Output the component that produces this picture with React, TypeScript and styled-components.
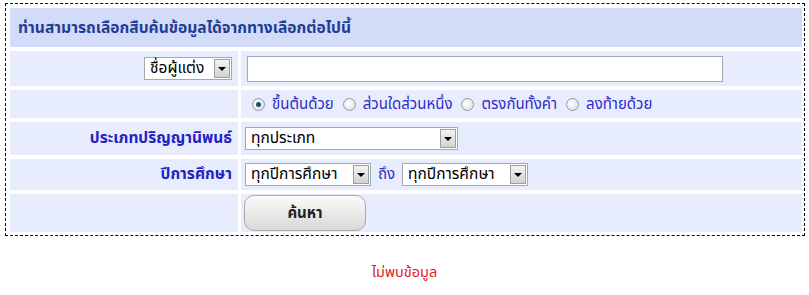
import styled, { createGlobalStyle } from "styled-components";

const GlobalStyle = createGlobalStyle`
  body {
    margin: 0;
    background: #ffffff;
    font-family: Tahoma, "Noto Sans Thai", "Noto Sans", "DejaVu Sans", sans-serif;
    font-size: 13px;
  }
`;

const Frame = styled.div`
  margin: 3px 0 0 5px;
  width: 792px;
  border: 1px dashed #000;
  padding: 4px 2px 3px 4px;
`;

const Grid = styled.div`
  display: grid;
  grid-template-columns: 228px 1fr;
  column-gap: 3px;
  row-gap: 4px;
`;

const HeaderCell = styled.div`
  grid-column: 1 / 3;
  height: 39px;
  background: #d2dcf9;
  display: flex;
  align-items: center;
  padding-left: 8px;
  color: #1f3c96;
  font-weight: bold;
  font-size: 15.6px;
`;

const LabelCell = styled.div<{ $h: number }>`
  height: ${(p) => p.$h}px;
  background: #e8edfd;
  display: flex;
  align-items: center;
  justify-content: flex-end;
  padding-right: 6px;
  color: #2222c4;
  font-weight: bold;
  font-size: 15.5px;
`;

const ValueCell = styled.div<{ $h: number }>`
  height: ${(p) => p.$h}px;
  background: #e8edfd;
  display: flex;
  align-items: center;
  gap: 7px;
  padding-left: 4px;
`;

const FakeSelect = styled.div<{ $w: number }>`
  width: ${(p) => p.$w}px;
  height: 23px;
  box-sizing: border-box;
  background: #fff;
  border: 1px solid #a3a9ae;
  display: flex;
  align-items: center;
  justify-content: space-between;
  padding: 0 1px 0 5px;
  color: #000;
  font-size: 15.5px;
  font-weight: normal;
`;

const Arrow = styled.span`
  width: 16px;
  height: 19px;
  box-sizing: border-box;
  border: 1px solid #9aa0a6;
  background: linear-gradient(#f4f4f4, #d2d2d2);
  display: flex;
  align-items: center;
  justify-content: center;
  &::after {
    content: "";
    border-left: 4px solid transparent;
    border-right: 4px solid transparent;
    border-top: 4px solid #000;
  }
`;

const TextInput = styled.div`
  width: 476px;
  height: 26px;
  box-sizing: border-box;
  border: 1px solid #a3a9ae;
  background: #fff;
  margin-left: 2px;
`;

const RadioGroup = styled.div`
  display: flex;
  align-items: center;
  gap: 9px;
  padding-left: 7px;
`;

const RadioItem = styled.label`
  display: flex;
  align-items: center;
  gap: 7px;
  color: #2c2cc8;
  font-size: 15px;
`;

const RadioDot = styled.span<{ $on?: boolean }>`
  width: 11px;
  height: 11px;
  border-radius: 50%;
  border: 1px solid #8d99a6;
  background: radial-gradient(circle at 40% 40%, #ffffff, #d5dade);
  display: flex;
  align-items: center;
  justify-content: center;
  &::after {
    content: "";
    width: 5px;
    height: 5px;
    border-radius: 50%;
    background: ${(p) => (p.$on ? "#1d4f6e" : "transparent")};
  }
`;

const To = styled.span`
  color: #2c2cc8;
  font-size: 15px;
`;

const SearchButton = styled.button`
  width: 122px;
  height: 36px;
  margin-left: -1px;
  border: 1px solid #a8a8a8;
  border-radius: 10px;
  background: linear-gradient(#fbfbfb, #e6e6e6 60%, #d9d9d9);
  font-family: inherit;
  font-size: 15px;
  font-weight: bold;
  color: #222;
`;

const NotFound = styled.div`
  margin-top: 26px;
  text-align: center;
  color: #e3202c;
  font-size: 14.5px;
`;

const Select = ({ w, label }: { w: number; label: string }) => (
  <FakeSelect $w={w}>
    <span>{label}</span>
    <Arrow />
  </FakeSelect>
);

const modes = ["ขึ้นต้นด้วย", "ส่วนใดส่วนหนึ่ง", "ตรงกันทั้งคำ", "ลงท้ายด้วย"];

export default function App() {
  return (
    <>
      <GlobalStyle />
      <Frame>
        <Grid>
          <HeaderCell>ท่านสามารถเลือกสืบค้นข้อมูลได้จากทางเลือกต่อไปนี้</HeaderCell>

          <LabelCell $h={35}>
            <Select w={88} label="ชื่อผู้แต่ง" />
          </LabelCell>
          <ValueCell $h={35}>
            <TextInput />
          </ValueCell>

          <LabelCell $h={28} />
          <ValueCell $h={28}>
            <RadioGroup>
              {modes.map((m, i) => (
                <RadioItem key={m}>
                  <RadioDot $on={i === 0} />
                  {m}
                </RadioItem>
              ))}
            </RadioGroup>
          </ValueCell>

          <LabelCell $h={33}>ประเภทปริญญานิพนธ์</LabelCell>
          <ValueCell $h={33}>
            <Select w={213} label="ทุกประเภท" />
          </ValueCell>

          <LabelCell $h={31}>ปีการศึกษา</LabelCell>
          <ValueCell $h={31}>
            <Select w={126} label="ทุกปีการศึกษา" />
            <To>ถึง</To>
            <Select w={126} label="ทุกปีการศึกษา" />
          </ValueCell>

          <LabelCell $h={38} />
          <ValueCell $h={38}>
            <SearchButton>ค้นหา</SearchButton>
          </ValueCell>
        </Grid>
      </Frame>
      <NotFound>ไม่พบข้อมูล</NotFound>
    </>
  );
}
